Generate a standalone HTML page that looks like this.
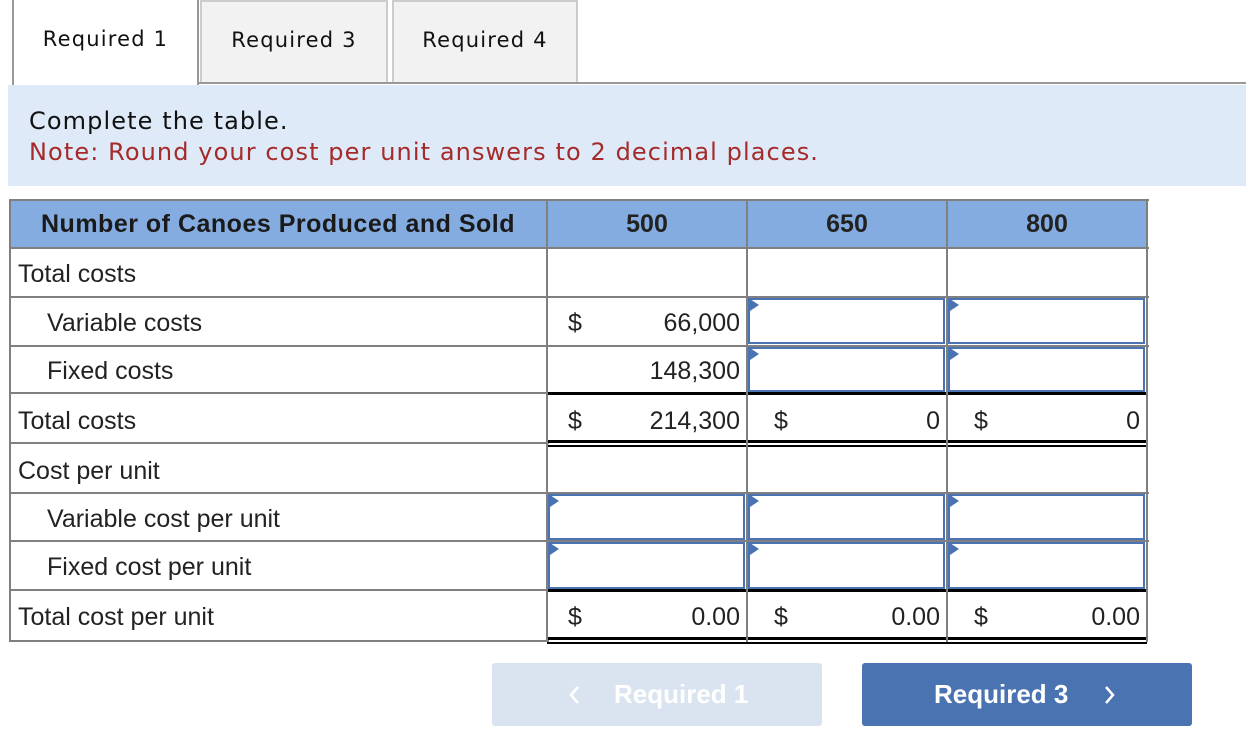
<!DOCTYPE html>
<html><head><style>
body{margin:0;width:1246px;height:750px;background:#fff;position:relative;overflow:hidden;font-family:"Liberation Sans",Arial,sans-serif;color:#222}
.a{position:absolute}
.tab{position:absolute;top:0;height:82px;font-family:"DejaVu Sans",Verdana,sans-serif;font-size:21px;letter-spacing:1.2px;color:#111;text-align:center;line-height:78px;box-sizing:border-box}
.h{position:absolute;height:2px;background:#808080}
.v{position:absolute;width:2px;background:#808080}
.t{position:absolute;font-size:25px;line-height:26px;color:#222}
.r{text-align:right}
.inp{position:absolute;border:2px solid #4a73b3;box-sizing:border-box;background:#fff}
.inp:before{content:"";position:absolute;left:0;top:0;border-left:9px solid #4a73b3;border-top:6px solid transparent;border-bottom:6px solid transparent;top:-1px}
.blk{position:absolute;height:3px;background:#000}
</style></head><body>
<div class="tab" style="left:12px;width:187px;border-left:2px solid #999;border-right:2px solid #999;background:#fff;height:85px">Required 1</div>
<div class="tab" style="left:200px;width:188px;border:2px solid #ccc;border-bottom:none;background:#f2f2f2;line-height:76px">Required 3</div>
<div class="tab" style="left:392px;width:186px;border:2px solid #ccc;border-bottom:none;background:#f2f2f2;line-height:76px">Required 4</div>
<div class="a" style="left:198px;top:82px;width:1048px;height:2px;background:#999"></div>
<div class="a" style="left:8px;top:85px;width:1238px;height:101px;background:#deeaf7"></div>
<div class="a" style="left:29px;top:106px;font-family:'DejaVu Sans',Verdana,sans-serif;font-size:24px;letter-spacing:1.1px;line-height:31px;color:#111">Complete the table.<br><span style="color:#a52a2a">Note: Round your cost per unit answers to 2 decimal places.</span></div>

<div class="a" style="left:9px;top:200px;width:1138px;height:48px;background:#85ace0"></div>
<div class="t" style="left:9px;top:211px;width:538px;text-align:center;font-weight:bold;color:#1a1a1a;letter-spacing:0.5px">Number of Canoes Produced and Sold</div>
<div class="t" style="left:547px;top:211px;width:200px;text-align:center;font-weight:bold">500</div>
<div class="t" style="left:747px;top:211px;width:200px;text-align:center;font-weight:bold">650</div>
<div class="t" style="left:947px;top:211px;width:200px;text-align:center;font-weight:bold">800</div>

<div class="h" style="left:9px;top:199px;width:1140px"></div>
<div class="h" style="left:9px;top:247px;width:1140px"></div>
<div class="h" style="left:9px;top:296px;width:1140px"></div>
<div class="h" style="left:9px;top:345px;width:1140px"></div>
<div class="h" style="left:9px;top:392px;width:540px"></div>
<div class="blk" style="left:547px;top:392px;width:600px"></div>
<div class="h" style="left:9px;top:442px;width:540px"></div>
<div class="blk" style="left:547px;top:440px;width:600px"></div>
<div class="blk" style="left:547px;top:445px;width:600px;height:2px"></div>
<div class="h" style="left:9px;top:492px;width:1140px"></div>
<div class="h" style="left:9px;top:540px;width:1140px"></div>
<div class="h" style="left:9px;top:589px;width:540px"></div>
<div class="blk" style="left:547px;top:589px;width:600px"></div>
<div class="h" style="left:9px;top:640px;width:540px"></div>
<div class="blk" style="left:547px;top:637px;width:600px"></div>
<div class="blk" style="left:547px;top:642px;width:600px;height:2px"></div>

<div class="v" style="left:9px;top:199px;height:443px"></div>
<div class="v" style="left:546px;top:199px;height:443px"></div>
<div class="v" style="left:746px;top:199px;height:443px"></div>
<div class="v" style="left:946px;top:199px;height:443px"></div>
<div class="v" style="left:1146px;top:199px;height:443px"></div>

<div class="t" style="left:18px;top:261px">Total costs</div>
<div class="t" style="left:47px;top:310px">Variable costs</div>
<div class="t" style="left:47px;top:358px">Fixed costs</div>
<div class="t" style="left:18px;top:408px">Total costs</div>
<div class="t" style="left:18px;top:458px">Cost per unit</div>
<div class="t" style="left:47px;top:506px">Variable cost per unit</div>
<div class="t" style="left:47px;top:554px">Fixed cost per unit</div>
<div class="t" style="left:18px;top:604px">Total cost per unit</div>

<div class="t" style="left:568px;top:310px">$</div>
<div class="t r" style="left:560px;top:310px;width:180px">66,000</div>
<div class="t r" style="left:560px;top:358px;width:180px">148,300</div>
<div class="t" style="left:568px;top:408px">$</div>
<div class="t r" style="left:560px;top:408px;width:180px">214,300</div>
<div class="t" style="left:774px;top:408px">$</div>
<div class="t r" style="left:760px;top:408px;width:180px">0</div>
<div class="t" style="left:974px;top:408px">$</div>
<div class="t r" style="left:960px;top:408px;width:180px">0</div>
<div class="t" style="left:568px;top:604px">$</div>
<div class="t r" style="left:560px;top:604px;width:180px">0.00</div>
<div class="t" style="left:774px;top:604px">$</div>
<div class="t r" style="left:760px;top:604px;width:180px">0.00</div>
<div class="t" style="left:974px;top:604px">$</div>
<div class="t r" style="left:960px;top:604px;width:180px">0.00</div>

<div class="inp" style="left:748px;top:298px;width:197px;height:46px"></div>
<div class="inp" style="left:948px;top:298px;width:197px;height:46px"></div>
<div class="inp" style="left:748px;top:347px;width:197px;height:45px"></div>
<div class="inp" style="left:948px;top:347px;width:197px;height:45px"></div>
<div class="inp" style="left:548px;top:494px;width:197px;height:46px"></div>
<div class="inp" style="left:748px;top:494px;width:197px;height:46px"></div>
<div class="inp" style="left:948px;top:494px;width:197px;height:46px"></div>
<div class="inp" style="left:548px;top:542px;width:197px;height:47px"></div>
<div class="inp" style="left:748px;top:542px;width:197px;height:47px"></div>
<div class="inp" style="left:948px;top:542px;width:197px;height:47px"></div>

<div class="a" style="left:492px;top:663px;width:330px;height:63px;background:#dae4f0;border-radius:3px;color:#fff;font-weight:bold;font-size:26px;line-height:63px">
<svg class="a" style="left:76px;top:22px" width="12" height="20" viewBox="0 0 12 20"><path d="M10 2 L3 10 L10 18" fill="none" stroke="#fff" stroke-width="2.5"/></svg>
<span style="position:absolute;left:122px">Required 1</span></div>
<div class="a" style="left:862px;top:663px;width:330px;height:63px;background:#4a73b2;border-radius:3px;color:#fff;font-weight:bold;font-size:26px;line-height:63px"><span style="position:absolute;left:72px">Required 3</span>
<svg class="a" style="left:242px;top:22px" width="12" height="20" viewBox="0 0 12 20"><path d="M2 2 L9 10 L2 18" fill="none" stroke="#fff" stroke-width="2.5"/></svg></div>
</body></html>
